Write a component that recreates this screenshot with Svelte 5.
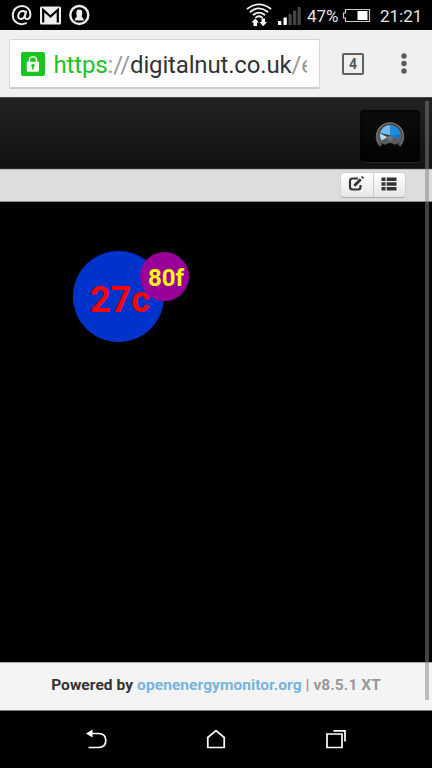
<script>
  const wifiArcs = ['M247.5 8.6Q259 0 270.5 8.6', 'M250.5 11.8Q259 5 267.5 11.8', 'M253.5 14.8Q259 10.5 264.5 14.8', 'M256 17.4Q259 15 262 17.4'];
  const bars = [
    { x: 278, y: 21, fill: '#fff' },
    { x: 283.5, y: 17.5, fill: '#fff' },
    { x: 288.5, y: 14, fill: '#444' },
    { x: 293, y: 10.5, fill: '#444' },
    { x: 297.5, y: 7, fill: '#444' }
  ];
</script>

<main class="phone">
  <header class="status">
    <svg width="432" height="30" viewBox="0 0 432 30" fill="none">
      <g stroke="#eee" stroke-width="2" stroke-linecap="round">
        <path d="M26 23.2C20 26 12.8 22 12.8 15.5S17.500 6 22.200 6 30.400 9.500 30.400 14.200C30.400 17.500 28.800 19 27 19 25.200 19 24.700 17.800 25 16.200L26 11.500" />
        <path d="M25.300 12.500C24.400 10.200 20.600 10.500 19 13.200S18 19 20.800 19C23 19 24.500 17 25 15" />
      </g>
      <rect x="40" y="6.500" width="21" height="18" rx="1.500" fill="#eee" />
      <path d="M43.200 22.500V10L50.500 16.500 57.800 10V22.500" stroke="#000" stroke-width="2.200" />
      <circle cx="79.300" cy="15" r="9" stroke="#eee" stroke-width="2.400" />
      <path d="M76.300 12.500a3 3 0 0 1 6 0c0 2-.5 3-.5 4.500 1 .5 2 1.400 2 3.500h-9c0-2 .8-3 2-3.500 0-1.500-.5-2.500-.5-4.500Z" fill="#eee" />
      <g stroke="#f4f4f4" stroke-width="1.800" stroke-linecap="round">
        {#each wifiArcs as d}<path {d} />{/each}
      </g>
      <path d="M251.500 22.500 255.300 18.500 259 22.500H257V26H253.500V22.500ZM259.500 22H261.500V18.500H265V22H267L263.200 26.200Z" fill="#fff" />
      {#each bars as b}<rect x={b.x} y={b.y} width="3.300" height={25 - b.y} fill={b.fill} />{/each}
      <path d="M345.500 9.500H369.500V21.500H345.500V18H343.500V13H345.500Z" stroke="#ccc" stroke-width="1.200" />
      <rect x="357.500" y="11" width="10" height="9" fill="#fff" />
    </svg>
    <span class="percent">47%</span>
    <span class="clock">21:21</span>
  </header>

  <section class="browser">
    <div class="address">
      <svg class="lock" width="24" height="24" viewBox="0 0 24 24">
        <rect width="24" height="24" rx="2" fill="#1bc41f" />
        <path d="M8.300 10.500V8.500a3.700 3.700 0 0 1 7.400 0v2" fill="none" stroke="#e9f9e9" stroke-width="1.600" />
        <rect x="5.700" y="9.700" width="12.300" height="10" rx="1" fill="#f3fbf3" />
        <path d="M10.300 14a1.700 1.700 0 1 1 2.400 1.200V17.500H11.100V15.200Z" fill="#1bc41f" />
      </svg>
      <div class="url"><span class="secure">https</span><span class="dim">://</span>digitalnut.co.uk<span class="dim">/e</span></div>
    </div>
    <div class="tabs">4</div>
    <svg class="more" width="6" height="22" viewBox="0 0 6 22" fill="#5a5a5a">
      <circle cx="3" cy="3" r="2.700" /><circle cx="3" cy="10.500" r="2.700" /><circle cx="3" cy="18" r="2.700" />
    </svg>
  </section>

  <nav class="top">
    <div class="gauge">
      <svg width="32" height="30" viewBox="0 0 30 28">
        <path d="M5.500 24.500A12.200 12.200 0 1 1 24.500 24.500L20 20.500H10Z" fill="#606060" stroke="#444" stroke-width="2.400" />
        <path d="M5.500 24A12.400 12.400 0 1 1 24.500 24" fill="none" stroke="#777" stroke-width="1.200" />
        <path d="M15 15.500 7.200 20A9.600 9.600 0 0 1 5.500 14Z" fill="#b8def2" />
        <path d="M15 16 5.500 15A9.600 9.600 0 0 1 15 5.500Z" fill="#74bceb" />
        <path d="M15 16V5.500A9.800 9.800 0 0 1 24.800 14L23.500 18.500Z" fill="#198be0" />
        <path d="M15 16 23.500 18.500 24.800 14Z" fill="#0a74cc" />
        <path d="M5.500 13 16 15.500 14.500 18Z" fill="#333" />
        <path d="M7 21.500 15 16.500 23 21.500 20 24H10Z" fill="#5c5c5c" />
        <circle cx="15" cy="18" r="2.600" fill="#707070" />
        <path d="M8.500 26.500Q15 18.500 21.500 26.500Z" fill="#070707" />
      </svg>
    </div>
  </nav>

  <div class="toolbar">
    <div class="buttons">
      <button aria-label="Edit">
        <svg width="17" height="16" viewBox="0 0 17 16" fill="none" stroke="#333" stroke-width="2.200">
          <path d="M10 2.500H4.500Q2 2.500 2 5V11Q2 13.500 4.500 13.500H10Q12.500 13.500 12.500 11V9" />
          <path d="M6.300 9.800 12.800 3.300" stroke-width="2.800" />
          <path d="M14 2.100 15.200.9" stroke-width="2.800" />
        </svg>
      </button>
      <button aria-label="List">
        <svg width="16" height="14" viewBox="0 0 16 14" fill="#333">
          <path d="M.5 .5h4v3.600h-4zM5.700 .5H15.500v3.600H5.700zM.5 5.200h4v3.600h-4zM5.700 5.200H15.500v3.600H5.700zM.5 9.900h4v3.600h-4zM5.700 9.900H15.500v3.600H5.700z" />
        </svg>
      </button>
    </div>
  </div>

  <section class="dashboard">
    <div class="celsius"><span>27c</span></div>
    <div class="fahrenheit"><span>80f</span></div>
  </section>

  <footer>
    <div class="credit">Powered by <span class="link">openenergymonitor.org</span>{' '}<span class="version">| v8.5.1 XT</span></div>
  </footer>

  <div class="system">
    <svg width="432" height="57" viewBox="0 711 432 57" fill="none" stroke="#fff" stroke-width="1.700">
      <path d="M90 733.500H98.500Q105.800 733.500 105.800 740.500T98.500 747.500H88.500" />
      <path d="M86 733.500 92.500 729.500V737.500Z" fill="#fff" stroke="none" />
      <path d="M207.800 747.500V737.500L216 730.500 224.200 737.500V747.500Z" />
      <path d="M327 734H342V747.500H327ZM333.500 730.800H345V741.500" />
    </svg>
  </div>
  <div class="scroll"></div>
</main>

<style>
  :global(body) { margin: 0; background: #000; }
  .phone { position: relative; width: 432px; height: 768px; overflow: hidden; background: #000; font-family: Roboto, sans-serif; display: flex; flex-direction: column; }
  .phone > * { flex-shrink: 0; box-sizing: border-box; }
  svg { display: block; }
  .status { height: 30px; position: relative; color: #e6e6e6; font-size: 17px; line-height: 30px; }
  .status span { position: absolute; top: 1px; white-space: nowrap; }
  .percent { left: 307px; }
  .clock { left: 380px; }
  .browser { height: 67px; background: #f0f0f0; display: flex; align-items: flex-start; }
  .address { margin: 9px 0 0 9px; width: 311px; height: 50px; box-sizing: border-box; background: #fff; border: 1px solid #d5d5d5; border-bottom: 2px solid #ccc; border-radius: 2px; display: flex; overflow: hidden; }
  .lock { margin: 12px 0 0 11px; flex-shrink: 0; }
  .url { margin: 8px 0 0 8.500px; width: 253px; height: 34px; line-height: 34px; overflow: hidden; white-space: nowrap; font-size: 24px; letter-spacing: -.16px; color: #333; }
  .secure { color: #1dc322; }
  .dim { color: #999; }
  .tabs { margin: 23px 0 0 22px; width: 22px; height: 22px; box-sizing: border-box; border: 2px solid #606060; border-radius: 2px; font-size: 14px; font-weight: 700; line-height: 18px; text-align: center; color: #5a5a5a; }
  .more { margin: 23px 0 0 37px; }
  .top { height: 72px; background: linear-gradient(#222, #111); border-top: 1px solid #484848; border-bottom: 1px solid #292929; display: flex; justify-content: flex-end; }
  .gauge { width: 60px; height: 52px; margin: 12px 12px 0 0; border-radius: 4px; background: linear-gradient(#0d0d0d, #020202); box-shadow: inset 0 1px 3px #000, 0 1px 0 #252525; display: flex; justify-content: center; }
  .gauge svg { margin-top: 9px; }
  .toolbar { height: 33px; background: #ddd; border-top: 1px solid #bbb; border-bottom: 1px solid #888; display: flex; justify-content: flex-end; }
  .buttons { display: flex; margin: 2px 26px 0 0; height: 26px; width: 66px; box-sizing: border-box; border: 1px solid #d0d0d0; border-bottom-color: #aaa; border-radius: 4px; overflow: hidden; background: linear-gradient(#fff, #e6e6e6); }
  button { flex: 1; padding: 0 0 2px; margin: 0; border: 0; background: none; display: flex; justify-content: center; align-items: center; }
  button + button { border-left: 1px solid #ccc; }
  .dashboard { height: 460px; position: relative; background: #000; color: red; font-weight: 700; }
  .celsius, .fahrenheit { position: absolute; border-radius: 50%; }
  .celsius { left: 73px; top: 48.500px; width: 91px; height: 91px; background: #03c; font-size: 36px; line-height: 36px; }
  .fahrenheit { left: 140px; top: 49.500px; width: 49px; height: 49px; background: #909; color: #ff0; font-size: 24px; line-height: 24px; }
  .dashboard span { position: absolute; white-space: nowrap; }
  .celsius span { left: 17px; top: 31px; }
  .fahrenheit span { left: 8px; top: 14px; }
  footer { height: 49px; background: #f4f4f4; border-top: 1px solid #aaa; border-bottom: 1px solid #777; text-align: center; font-size: 15.500px; letter-spacing: .07px; font-weight: 700; line-height: 45px; color: #333; white-space: nowrap; }
  .link { color: #75b5de; }
  .version { color: #999; }
  .system { height: 57px; background: #000; }
  .scroll { position: absolute; left: 425px; top: 101px; width: 4px; height: 599px; background: rgba(128, 128, 128, .5); }
</style>
